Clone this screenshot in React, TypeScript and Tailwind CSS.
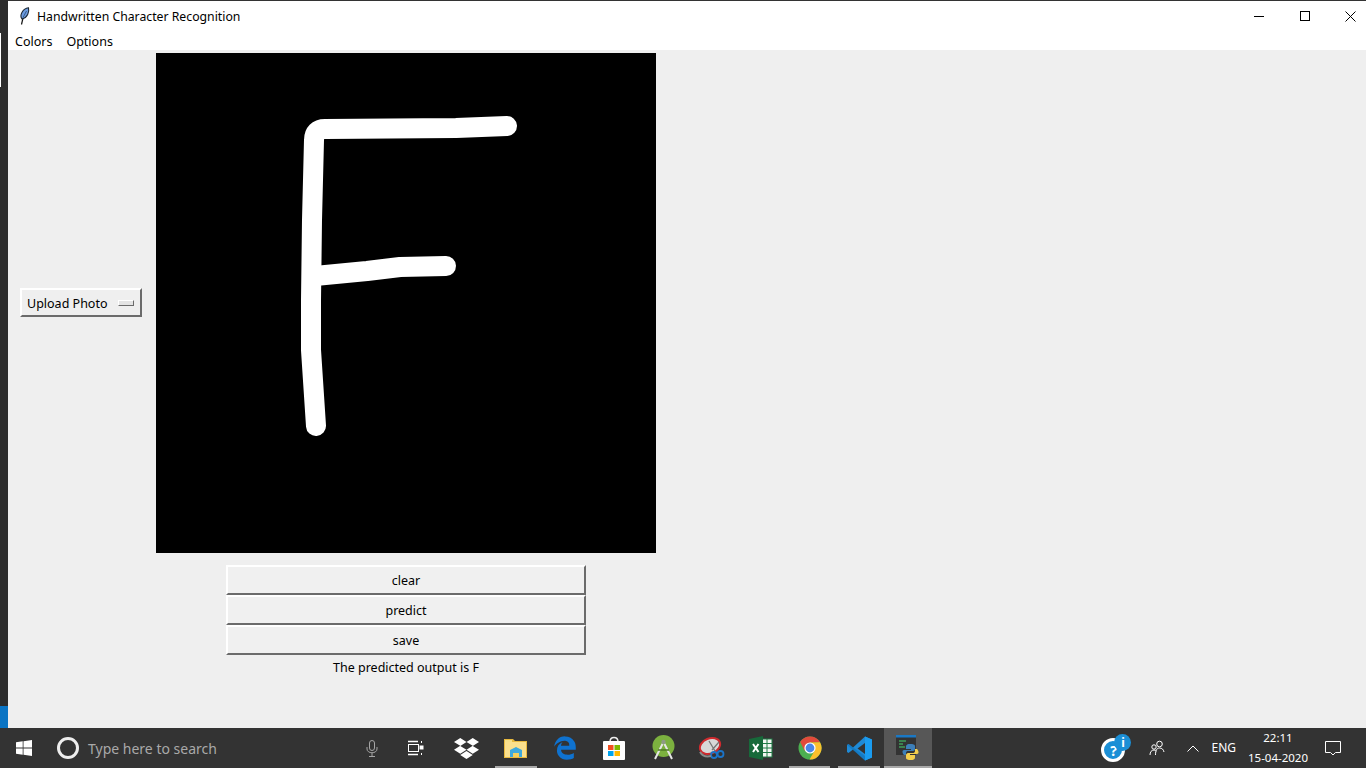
import { FaDropbox, FaEdgeLegacy } from 'react-icons/fa'

const font = "font-['Noto_Sans','Open_Sans',sans-serif]"

function Feather() {
  return (
    <svg width="14" height="18" viewBox="0 0 14 18">
      <path d="M3.5 17.5L5 11" stroke="#111" strokeWidth="1.2" fill="none" />
      <path d="M4 12C1 8 5 1.500 10.500 0.800C11.500 5 9.500 11 4 12Z" fill="#6c9ce0" stroke="#1c2733" strokeWidth="1.100" />
      <path d="M5 10.500L8.500 4" stroke="#2d4a73" strokeWidth="0.800" />
    </svg>
  )
}

function WindowControls() {
  return (
    <div className="ml-auto mr-[10px] flex items-center gap-[35px]">
      <svg width="11" height="11" viewBox="0 0 11 11"><path d="M0 5.5H10" stroke="#000" /></svg>
      <svg width="10" height="10" viewBox="0 0 10 10"><rect x="0.5" y="0.5" width="9" height="9" fill="none" stroke="#000" /></svg>
      <svg width="11" height="11" viewBox="0 0 11 11"><path d="M0.5 0.5L10.5 10.5M10.5 0.5L0.5 10.5" stroke="#000" /></svg>
    </div>
  )
}

function TkButton({ label }: { label: string }) {
  return (
    <button className="h-[30px] w-full border-2 border-t-white border-l-white border-r-[#6b6b6b] border-b-[#6b6b6b] bg-[#f0f0f0] pt-[2px] text-[12.5px] text-black">
      {label}
    </button>
  )
}

function StoreIcon() {
  return (
    <svg width="24" height="26" viewBox="0 0 24 26">
      <path d="M8 7C8 1 16 1 16 7" fill="none" stroke="#eee" strokeWidth="1.5" />
      <rect x="1" y="6" width="22" height="19" rx="1" fill="#fff" />
      <rect x="6" y="10" width="5.5" height="5" fill="#f25022" />
      <rect x="12.5" y="10" width="5.5" height="5" fill="#7fba00" />
      <rect x="6" y="16" width="5.5" height="5" fill="#00a4ef" />
      <rect x="12.5" y="16" width="5.5" height="5" fill="#ffb900" />
    </svg>
  )
}

function ExplorerIcon() {
  return (
    <svg width="24" height="22" viewBox="0 0 24 22">
      <path d="M0 2H9L11 4H23V21H0Z" fill="#e8b93e" />
      <rect x="1" y="3" width="7" height="2" fill="#f6e08a" />
      <rect x="1" y="5" width="21" height="15" fill="#fbe08d" />
      <path d="M6 20V13L12 10L18 13V20H15V16H9V20Z" fill="#3fa9dc" />
      <rect x="9" y="16" width="6" height="4" fill="#f5cf5d" />
    </svg>
  )
}

function AndroidStudio() {
  return (
    <svg width="24" height="26" viewBox="0 0 24 26">
      <circle cx="12.5" cy="11" r="11" fill="#7cb13f" />
      <circle cx="12.5" cy="7" r="2.2" fill="#8f9a86" />
      <path d="M11.5 9L4 24M13.5 9L21 24" stroke="#e6e6e6" strokeWidth="2" />
      <path d="M7 15H18" stroke="#4e7a25" strokeWidth="1.5" />
    </svg>
  )
}

function SnipIcon() {
  return (
    <svg width="26" height="24" viewBox="0 0 26 24">
      <ellipse cx="11" cy="10" rx="10.5" ry="7.5" transform="rotate(-22 11 10)" fill="#d8d8d8" stroke="#cf2a2e" strokeWidth="2" />
      <path d="M10 5L16 15M20 6L13 14" stroke="#777" strokeWidth="1.3" />
      <circle cx="15" cy="19" r="3" fill="none" stroke="#1b74c9" strokeWidth="1.8" />
      <circle cx="21.5" cy="18" r="3" fill="none" stroke="#1b74c9" strokeWidth="1.8" />
      <path d="M1 16C4 21 8 21 12 20" fill="none" stroke="#8a8a8a" strokeWidth="2" />
    </svg>
  )
}

function ExcelIcon() {
  return (
    <svg width="24" height="24" viewBox="0 0 24 24">
      <rect x="10" y="3" width="13" height="18" fill="#f3f7f3" stroke="#1f7a45" />
      <path d="M13 3V21M18 3V21M10 7.5H23M10 12H23M10 16.5H23" stroke="#1f7a45" />
      <path d="M0 3L14 0V24L0 21Z" fill="#17693a" />
      <path d="M4 8L9.5 16M9.5 8L4 16" stroke="#fff" strokeWidth="2" />
    </svg>
  )
}

function ChromeIcon() {
  return (
    <svg width="24" height="24" viewBox="0 0 24 24">
      <circle cx="12" cy="12" r="11.5" fill="#4caf50" />
      <path d="M12 .5A11.5 11.5 0 0 1 22 6.3L12 6.5 6.6 14.8 2.2 6A11.5 11.5 0 0 1 12 .5Z" fill="#e24a3b" />
      <path d="M22 6.3A11.5 11.5 0 0 1 11.5 23.5L17 14 12 6.5Z" fill="#fbc02d" />
      <circle cx="12" cy="12" r="5.6" fill="#fff" />
      <circle cx="12" cy="12" r="4.4" fill="#4a86e8" />
    </svg>
  )
}

function VsCodeIcon() {
  return (
    <svg width="25" height="25" viewBox="0 0 25 25">
      <path d="M18 0.5L25 3.5V21.5L18 24.5L6 13.5L1.5 17L0 16V9L1.5 8L6 11.5Z" fill="#1f8ad6" />
      <path d="M18 0.5L25 3.5V21.5L18 24.5Z" fill="#1a9cf0" />
      <path d="M18 7L10.5 12.5L18 18Z" fill="#333" />
      <path d="M1.5 8L18 20V24.5L0 9Z" fill="#0b6fb8" opacity="0.55" />
    </svg>
  )
}

function PythonIdle() {
  return (
    <svg width="24" height="26" viewBox="0 0 24 26">
      <rect x="0" y="1" width="20" height="19" fill="#333" />
      <rect x="0" y="0" width="20" height="2.5" fill="#1b78c4" />
      <path d="M3 6H10M3 9H7M3 12H9" stroke="#3f9d5a" strokeWidth="1.3" />
      <path d="M14 9C10 9 10 11 10 12V14H15V15H8C6 15 6 18 8 20H10V18C10 16.5 11 16 12.5 16H17C18 16 19 15 19 14V11C19 9.5 17 9 14 9Z" fill="#3d7fb8" />
      <path d="M15 25C19 25 19 23 19 22V20H14V19H21C23 19 23 16 21 14H19V16C19 17.5 18 18 16.5 18H12C11 18 10 19 10 20V23C10 24.5 12 25 15 25Z" fill="#f4cf4c" />
    </svg>
  )
}

function HelpTray() {
  return (
    <div className="relative h-[28px] w-[30px]">
      <div className={`absolute bottom-0 left-0 flex h-[24px] w-[24px] items-center justify-center rounded-full border-[3px] border-white bg-[#1b8fd6] text-[14px] font-bold text-white ${font}`}>?</div>
      <div className={`absolute right-0 top-0 flex h-[17px] w-[17px] items-center justify-center rounded-full bg-[#1b8fd6] text-[12px] font-bold leading-none text-white ${font}`}>i</div>
    </div>
  )
}

function Slot({ width, active, running, children }: { width: string; active?: boolean; running?: boolean; children: React.ReactNode }) {
  return (
    <div className={`relative flex h-full items-center justify-center ${width} ${active ? 'bg-[#575757]' : ''}`}>
      {children}
      {running && <div className={`absolute bottom-0 h-[2px] bg-[#a9a9a9] ${active ? 'inset-x-0' : 'inset-x-[4px]'}`} />}
    </div>
  )
}

export default function App() {
  return (
    <div className={`flex h-screen flex-col overflow-hidden bg-[#333] ${font}`}>
      <div className="flex h-[728px]">
        {/* edge of the window behind */}
        <div className="flex w-[8px] flex-col bg-[#2c2c2c]">
          <div className="mt-[33px] h-[54px] w-px bg-white" />
          <div className="mt-auto h-[22px] bg-[#0a74c4]" />
        </div>

        <div className="flex flex-1 flex-col border-t border-[#333]">
          <div className="flex h-[30px] items-center bg-white pl-[10px]">
            <Feather />
            <span className="ml-[5px] pt-[2px] text-[12.25px] text-black">Handwritten Character Recognition</span>
            <WindowControls />
          </div>
          <div className="flex h-[19px] items-center gap-[14px] bg-white pl-[7px] pt-[3px] text-[12.5px] text-black">
            <span>Colors</span>
            <span>Options</span>
          </div>

          <div className="flex flex-1 items-start bg-[#efefef] pl-[12px] pt-[3px]">
            <div className="flex h-[499px] w-[122px] items-center">
              <div className="flex h-[29px] w-full items-center justify-between border-2 border-t-white border-l-white border-r-[#6b6b6b] border-b-[#6b6b6b] pl-[5px] pr-[6px] text-[12.5px] text-black">
                <span className="pt-[4px]">Upload Photo</span>
                <div className="h-[6px] w-[16px] border border-t-white border-l-white border-r-[#6b6b6b] border-b-[#6b6b6b] bg-[#e4e4e4]" />
              </div>
            </div>

            <div className="ml-[14px] flex w-[500px] flex-col items-center">
              <svg width="500" height="500" viewBox="156 53 500 500" className="bg-black">
                <path
                  d="M507 126L456 128L325 129Q314 129 314 140L312 220L311 300L311 350L316 426"
                  fill="none"
                  stroke="#fff"
                  strokeWidth="20"
                  strokeLinecap="round"
                  strokeLinejoin="round"
                />
                <path
                  d="M315 276L367 271L400 267L446 266"
                  fill="none"
                  stroke="#fff"
                  strokeWidth="20"
                  strokeLinecap="round"
                  strokeLinejoin="round"
                />
              </svg>
              <div className="mt-[12px] flex w-[360px] flex-col">
                <TkButton label="clear" />
                <TkButton label="predict" />
                <TkButton label="save" />
              </div>
              <div className="mt-[4px] text-[12.5px] text-black">The predicted output is F</div>
            </div>
          </div>
        </div>
      </div>

      {/* taskbar */}
      <div className="flex h-[40px] items-center bg-[#333]">
        <div className="flex h-full w-[48px] items-center justify-center">
          <svg width="16" height="16" viewBox="0 0 16 16" fill="#fff">
            <path d="M0 2.3L6.7 1.3V7.6H0ZM7.5 1.2L16 0V7.6H7.5ZM0 8.4H6.7V14.7L0 13.7ZM7.5 8.4H16V16L7.5 14.8Z" />
          </svg>
        </div>
        <div className="flex h-full w-[312px] items-center pl-[9px]">
          <div className="h-[22px] w-[22px] rounded-full border-[3px] border-[#eee]" />
          <span className="ml-[9px] text-[14px] text-[#a9a9a9]">Type here to search</span>
        </div>
        <div className="flex h-full w-[24px] items-center justify-center">
          <svg width="12" height="17" viewBox="0 0 12 17" fill="none" stroke="#a6a6a6">
            <rect x="3.5" y="0.5" width="5" height="10" rx="2.5" />
            <path d="M1 7V9C1 14 11 14 11 9V7M6 13V16.5M3 16.5H9" />
          </svg>
        </div>
        <div className="ml-[8px] flex h-full w-[50px] items-center justify-center">
          <svg width="16" height="16" viewBox="0 0 16 16" fill="none" stroke="#fff" className="mr-[2px]">
            <path d="M0 1.5H10M0 14.5H10" strokeWidth="1.3" />
            <rect x="0.5" y="4.5" width="10" height="7" />
            <path d="M13.5 1V3M13.5 13V15" />
            <rect x="12" y="6" width="3" height="3" fill="#fff" />
          </svg>
        </div>
        <Slot width="w-[49px]"><FaDropbox className="text-[25px] text-white" /></Slot>
        <Slot width="w-[50px]" running><ExplorerIcon /></Slot>
        <Slot width="w-[48px]"><FaEdgeLegacy className="text-[24px] text-[#0f72cf]" /></Slot>
        <Slot width="w-[49px]"><StoreIcon /></Slot>
        <Slot width="w-[49px]"><AndroidStudio /></Slot>
        <Slot width="w-[49px]"><SnipIcon /></Slot>
        <Slot width="w-[49px]"><ExcelIcon /></Slot>
        <Slot width="w-[49px]" running><ChromeIcon /></Slot>
        <Slot width="w-[50px]" running><VsCodeIcon /></Slot>
        <Slot width="w-[48px]" active running><PythonIdle /></Slot>

        <div className="ml-auto flex h-full items-center">
          <HelpTray />
          <svg width="16" height="16" viewBox="0 0 16 16" fill="none" stroke="#fff" className="ml-[18px]">
            <circle cx="10.5" cy="4" r="2.8" />
            <path d="M6.5 15C6.5 10 8 8 10.5 8C13 8 14.5 9.5 15 12" />
            <circle cx="5" cy="7" r="2.2" />
            <path d="M1 15C1 12 2.5 10 5 10C6 10 7 10.5 7.5 11" />
          </svg>
          <svg width="12" height="7" viewBox="0 0 12 7" fill="none" stroke="#fff" className="ml-[22px]">
            <path d="M0.5 6.5L6 1L11.5 6.5" />
          </svg>
          <span className="ml-[12px] text-[12px] text-white">ENG</span>
          <div className="ml-[12px] flex w-[60px] flex-col items-center whitespace-nowrap text-[11.5px] leading-[20px] text-white">
            <span>22:11</span>
            <span>15-04-2020</span>
          </div>
          <svg width="16" height="15" viewBox="0 0 16 15" fill="none" stroke="#fff" className="ml-[17px] mr-[25px]">
            <path d="M0.5 0.5H15.5V11.5H10.5L8 14L5.5 11.5H0.5Z" />
          </svg>
        </div>
      </div>
    </div>
  )
}
